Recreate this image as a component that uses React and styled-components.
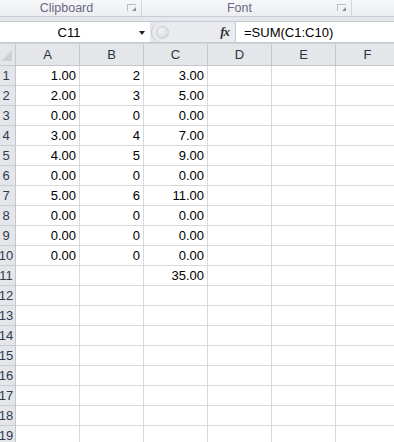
import styled, { createGlobalStyle } from "styled-components";

const GlobalStyle = createGlobalStyle`
  html, body {
    margin: 0;
    padding: 0;
    background: #ffffff;
    overflow: hidden;
  }
  body {
    font-family: "Liberation Sans", Arial, sans-serif;
  }
`;

const COLS = ["A", "B", "C", "D", "E", "F"];

const rows = [
  ["1.00", "2", "3.00"],
  ["2.00", "3", "5.00"],
  ["0.00", "0", "0.00"],
  ["3.00", "4", "7.00"],
  ["4.00", "5", "9.00"],
  ["0.00", "0", "0.00"],
  ["5.00", "6", "11.00"],
  ["0.00", "0", "0.00"],
  ["0.00", "0", "0.00"],
  ["0.00", "0", "0.00"],
  ["", "", "35.00"],
  [], [], [], [], [], [], [], [],
];

const Window = styled.div`
  width: 394px;
  height: 442px;
  overflow: hidden;
  background: #fff;
`;

const Ribbon = styled.div`
  display: flex;
  height: 16px;
  background: linear-gradient(#f6f7f9, #eceef2);
  border-bottom: 1px solid #c9ced6;
`;

const Group = styled.div`
  display: flex;
  align-items: center;
  width: ${(p) => p.w}px;
  flex: none;
  border-right: 1px solid #d2d6dc;
`;

const GroupLabel = styled.span`
  flex: 1;
  text-align: center;
  font-size: 12.5px;
  color: #6c6782;
  line-height: 16px;
  padding-left: ${(p) => p.pad || 0}px;
`;

const Launcher = styled.span`
  position: relative;
  width: 8px;
  height: 6px;
  margin-right: 5px;
  margin-bottom: 1px;
  border-top: 1px solid #b8bcc4;
  border-left: 1px solid #b8bcc4;
  &::after {
    content: "";
    position: absolute;
    right: 0;
    bottom: 0;
    width: 0;
    height: 0;
    border-left: 4px solid transparent;
    border-bottom: 4px solid #8a8f98;
  }
`;

const Strip = styled.div`
  height: 4px;
  background: #e4e7ec;
`;

const FormulaBar = styled.div`
  display: flex;
  height: 20px;
  border-top: 1px solid #c5cad2;
  border-bottom: 1px solid #c5cad2;
  background: #e4e7ec;
`;

const NameBox = styled.div`
  position: relative;
  width: 150px;
  flex: none;
  background: #fff;
  display: flex;
  align-items: center;
  justify-content: center;
  font-size: 13px;
  color: #000;
  padding-right: 12px;
  box-sizing: border-box;
`;

const DropArrow = styled.span`
  position: absolute;
  right: 5px;
  top: 9px;
  width: 0;
  height: 0;
  border-left: 3.5px solid transparent;
  border-right: 3.5px solid transparent;
  border-top: 4px solid #222;
`;

const Splitter = styled.div`
  width: 84px;
  flex: none;
  display: flex;
  align-items: center;
  background: #e9ebee;
  border-radius: 11px 0 0 11px;
  border-left: 1px solid #c3c7cd;
  margin-left: 1px;
  box-sizing: border-box;
`;

const Knob = styled.span`
  width: 11px;
  height: 11px;
  margin-left: 4px;
  border-radius: 50%;
  background: radial-gradient(circle at 40% 35%, #f4f5f7, #cdd0d5);
  border: 1px solid #c8ccd1;
`;

const Fx = styled.span`
  margin-left: auto;
  margin-right: 6px;
  font-family: "Liberation Serif", "Times New Roman", serif;
  font-style: italic;
  font-weight: bold;
  font-size: 13px;
  color: #333;
  letter-spacing: -1px;
`;

const Input = styled.div`
  flex: 1;
  background: #fff;
  border-left: 1px solid #c5cad2;
  display: flex;
  align-items: center;
  padding-left: 8px;
  font-size: 13px;
  color: #000;
`;

const Sheet = styled.div`
  display: grid;
  grid-template-columns: 16px repeat(6, 64px);
  grid-template-rows: 22px;
  grid-auto-rows: 20px;
  border-top: 1px solid #d0d4da;
`;

const Corner = styled.div`
  position: relative;
  background: #e4e6ea;
  border-right: 1px solid #c3c7cd;
  border-bottom: 1px solid #c3c7cd;
  box-sizing: border-box;
  &::after {
    content: "";
    position: absolute;
    right: 3px;
    bottom: 4px;
    width: 0;
    height: 0;
    border-left: 11px solid transparent;
    border-bottom: 11px solid #cdd0d5;
  }
`;

const ColHead = styled.div`
  background: #e4e6ea;
  border-right: 1px solid #c3c7cd;
  border-bottom: 1px solid #c3c7cd;
  box-sizing: border-box;
  display: flex;
  align-items: center;
  justify-content: center;
  font-size: 13px;
  color: #2a3548;
`;

const RowHead = styled.div`
  background: #e4e6ea;
  border-right: 1px solid #c3c7cd;
  border-bottom: 1px solid #c9cdd2;
  box-sizing: border-box;
  display: flex;
  align-items: center;
  overflow: hidden;
  font-size: 13px;
  color: #2e3a4e;
`;

const RowNum = styled.span`
  width: 12px;
  flex: none;
  display: flex;
  justify-content: center;
  white-space: nowrap;
`;

const Cell = styled.div`
  border-right: 1px solid #d9d9d9;
  border-bottom: 1px solid #d9d9d9;
  box-sizing: border-box;
  display: flex;
  align-items: center;
  justify-content: flex-end;
  padding-right: 3px;
  font-size: 13px;
  color: #000;
`;

export default function App() {
  return (
    <Window>
      <GlobalStyle />
      <Ribbon>
        <Group w={141}>
          <GroupLabel pad={6}>Clipboard</GroupLabel>
          <Launcher />
        </Group>
        <Group w={209}>
          <GroupLabel>Font</GroupLabel>
          <Launcher />
        </Group>
      </Ribbon>
      <Strip />
      <FormulaBar>
        <NameBox>
          C11
          <DropArrow />
        </NameBox>
        <Splitter>
          <Knob />
          <Fx>fx</Fx>
        </Splitter>
        <Input>=SUM(C1:C10)</Input>
      </FormulaBar>
      <Sheet>
        <Corner />
        {COLS.map((c) => (
          <ColHead key={c}>{c}</ColHead>
        ))}
        {rows.map((r, i) => [
          <RowHead key={"h" + i}>
            <RowNum>{i + 1}</RowNum>
          </RowHead>,
          ...COLS.map((c, j) => <Cell key={c + i}>{r[j] || ""}</Cell>),
        ])}
      </Sheet>
    </Window>
  );
}
